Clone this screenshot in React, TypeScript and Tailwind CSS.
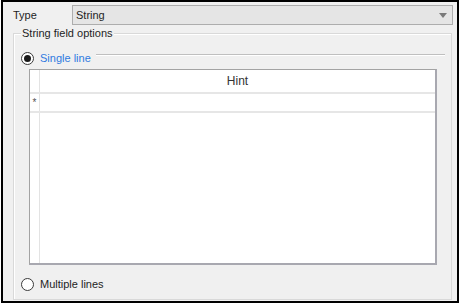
const font = { fontFamily: '"Liberation Sans", Arial, sans-serif' };

function Radio({ checked }: { checked?: boolean }) {
    return (
        <span className="flex h-[13px] w-[13px] shrink-0 items-center justify-center rounded-full border border-[#3a3a3a] bg-white">
            {checked && <span className="h-[7px] w-[7px] rounded-full bg-[#1a1a1a]" />}
        </span>
    );
}

export default function App() {
    return (
        <div className="h-[307px] w-[461px] bg-white text-[11px] text-[#1e1e1e]" style={font}>
            <div className="ml-[1px] flex h-[303px] w-[458px] flex-col border-2 border-black bg-[#f0f0f0]">
                {/* Type row */}
                <div className="flex items-center pl-[10px] pt-[3px]">
                    <span className="w-[59px] leading-4">Type</span>
                    <div className="flex h-[20px] w-[381px] items-center justify-between border border-[#adadad] bg-[#e5e5e5] pl-[3px] pr-[5px]">
                        <span className="leading-4">String</span>
                        <svg width="8" height="5" viewBox="0 0 8 5">
                            <path d="M0 0 H8 L4 5 Z" fill="#7a7a7a" />
                        </svg>
                    </div>
                </div>

                {/* String field options group */}
                <div className="relative ml-[10px] mt-[8px] flex h-[267px] w-[439px] flex-col border border-[#d9d9d9] shadow-[inset_1px_1px_0_#ffffff]">
                    <span className="absolute -top-[9px] left-[7px] bg-[#f0f0f0] px-[1px] leading-4">String field options</span>

                    {/* Single line */}
                    <div className="ml-[7px] mt-[16px] flex h-[16px] items-center">
                        <Radio checked />
                        <span className="ml-[6px] leading-4 text-[#2f7ae0]">Single line</span>
                        <div className="ml-[5px] mr-[6px] mb-[6px] h-[2px] flex-1 border-t border-b border-t-[#bfbfbf] border-b-white" />
                    </div>

                    {/* Hint table */}
                    <div className="ml-[15px] mt-[3px] flex h-[196px] w-[408px] flex-col border border-[#a3a3a3] border-r-2 border-b-2 border-r-[#a8a8b0] border-b-[#a8a8b0] bg-white">
                        <div className="flex h-[24px] border-b-2 border-[#e6e6e6]">
                            <div className="w-[10px] border-r border-[#e3e3e3]" />
                            <div className="flex flex-1 items-center justify-center text-[12px] leading-4 text-[#333]">Hint</div>
                        </div>
                        <div className="flex h-[19px] border-b-2 border-[#e6e6e6]">
                            <div className="flex w-[10px] items-center justify-center border-r border-[#e3e3e3] text-[10px] text-[#555]">*</div>
                            <div className="flex-1" />
                        </div>
                        <div className="flex flex-1">
                            <div className="w-[10px] border-r border-[#e3e3e3]" />
                            <div className="flex-1" />
                        </div>
                    </div>

                    {/* Multiple lines */}
                    <div className="ml-[7px] mt-[11px] flex h-[16px] items-center">
                        <Radio />
                        <span className="ml-[6px] leading-4">Multiple lines</span>
                    </div>
                </div>
            </div>
        </div>
    );
}
